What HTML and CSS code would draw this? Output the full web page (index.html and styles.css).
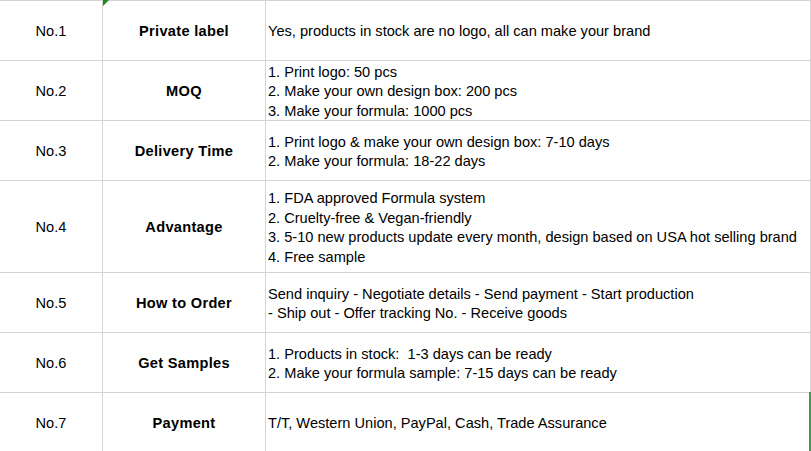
FILE: index.html
```html
<!DOCTYPE html>
<html>
<head>
<meta charset="utf-8">
<link rel="stylesheet" href="styles.css">
</head>
<body>
<div class="sheet">
  <div class="cell num">No.1</div>
  <div class="cell key first">Private label<span class="flag"></span></div>
  <div class="cell val">Yes, products in stock are no logo, all can make your brand</div>

  <div class="cell num">No.2</div>
  <div class="cell key">MOQ</div>
  <div class="cell val">1. Print logo: 50 pcs<br>2. Make your own design box: 200 pcs<br>3. Make your formula: 1000 pcs</div>

  <div class="cell num">No.3</div>
  <div class="cell key">Delivery Time</div>
  <div class="cell val">1. Print logo &amp; make your own design box: 7-10 days<br>2. Make your formula: 18-22 days</div>

  <div class="cell num">No.4</div>
  <div class="cell key">Advantage</div>
  <div class="cell val">1. FDA approved Formula system<br>2. Cruelty-free &amp; Vegan-friendly<br>3. 5-10 new products update every month, design based on USA hot selling brand<br>4. Free sample</div>

  <div class="cell num">No.5</div>
  <div class="cell key">How to Order</div>
  <div class="cell val">Send inquiry - Negotiate details - Send payment - Start production<br>- Ship out - Offer tracking No. - Receive goods</div>

  <div class="cell num">No.6</div>
  <div class="cell key">Get Samples</div>
  <div class="cell val">1. Products in stock:&nbsp; 1-3 days can be ready<br>2. Make your formula sample: 7-15 days can be ready</div>

  <div class="cell num">No.7</div>
  <div class="cell key">Payment</div>
  <div class="cell val last">T/T, Western Union, PayPal, Cash, Trade Assurance<span class="sel"></span></div>
</div>
</body>
</html>
```

FILE: styles.css
```css
html, body {
  margin: 0;
  padding: 0;
  background: #ffffff;
}

body {
  font-family: "Liberation Sans", Arial, sans-serif;
  font-size: 14.6px;
  color: #000000;
  overflow: hidden;
}

.sheet {
  display: grid;
  grid-template-columns: 102px 162px 544px;
  grid-template-rows: 59px 59px 59px 91px 59px 59px 58px;
  gap: 1px;
  width: 810px;
  background: #d4d4d4;
  border-top: 1px solid #d4d4d4;
  border-right: 1px solid #d4d4d4;
}

.cell {
  background: #ffffff;
  display: flex;
  align-items: center;
  line-height: 19.5px;
  padding-top: 3px;
  position: relative;
}

.num {
  justify-content: center;
}

.key {
  justify-content: center;
  font-weight: bold;
  letter-spacing: 0.3px;
}

.val {
  padding-left: 2px;
  white-space: nowrap;
}

.flag {
  position: absolute;
  top: -1px;
  left: 0;
  width: 0;
  height: 0;
  border-top: 6px solid #1e8a1e;
  border-right: 6px solid transparent;
}

.sel {
  position: absolute;
  top: -1px;
  right: -1px;
  bottom: 0;
  width: 2px;
  background: #3e9b4a;
}
```
